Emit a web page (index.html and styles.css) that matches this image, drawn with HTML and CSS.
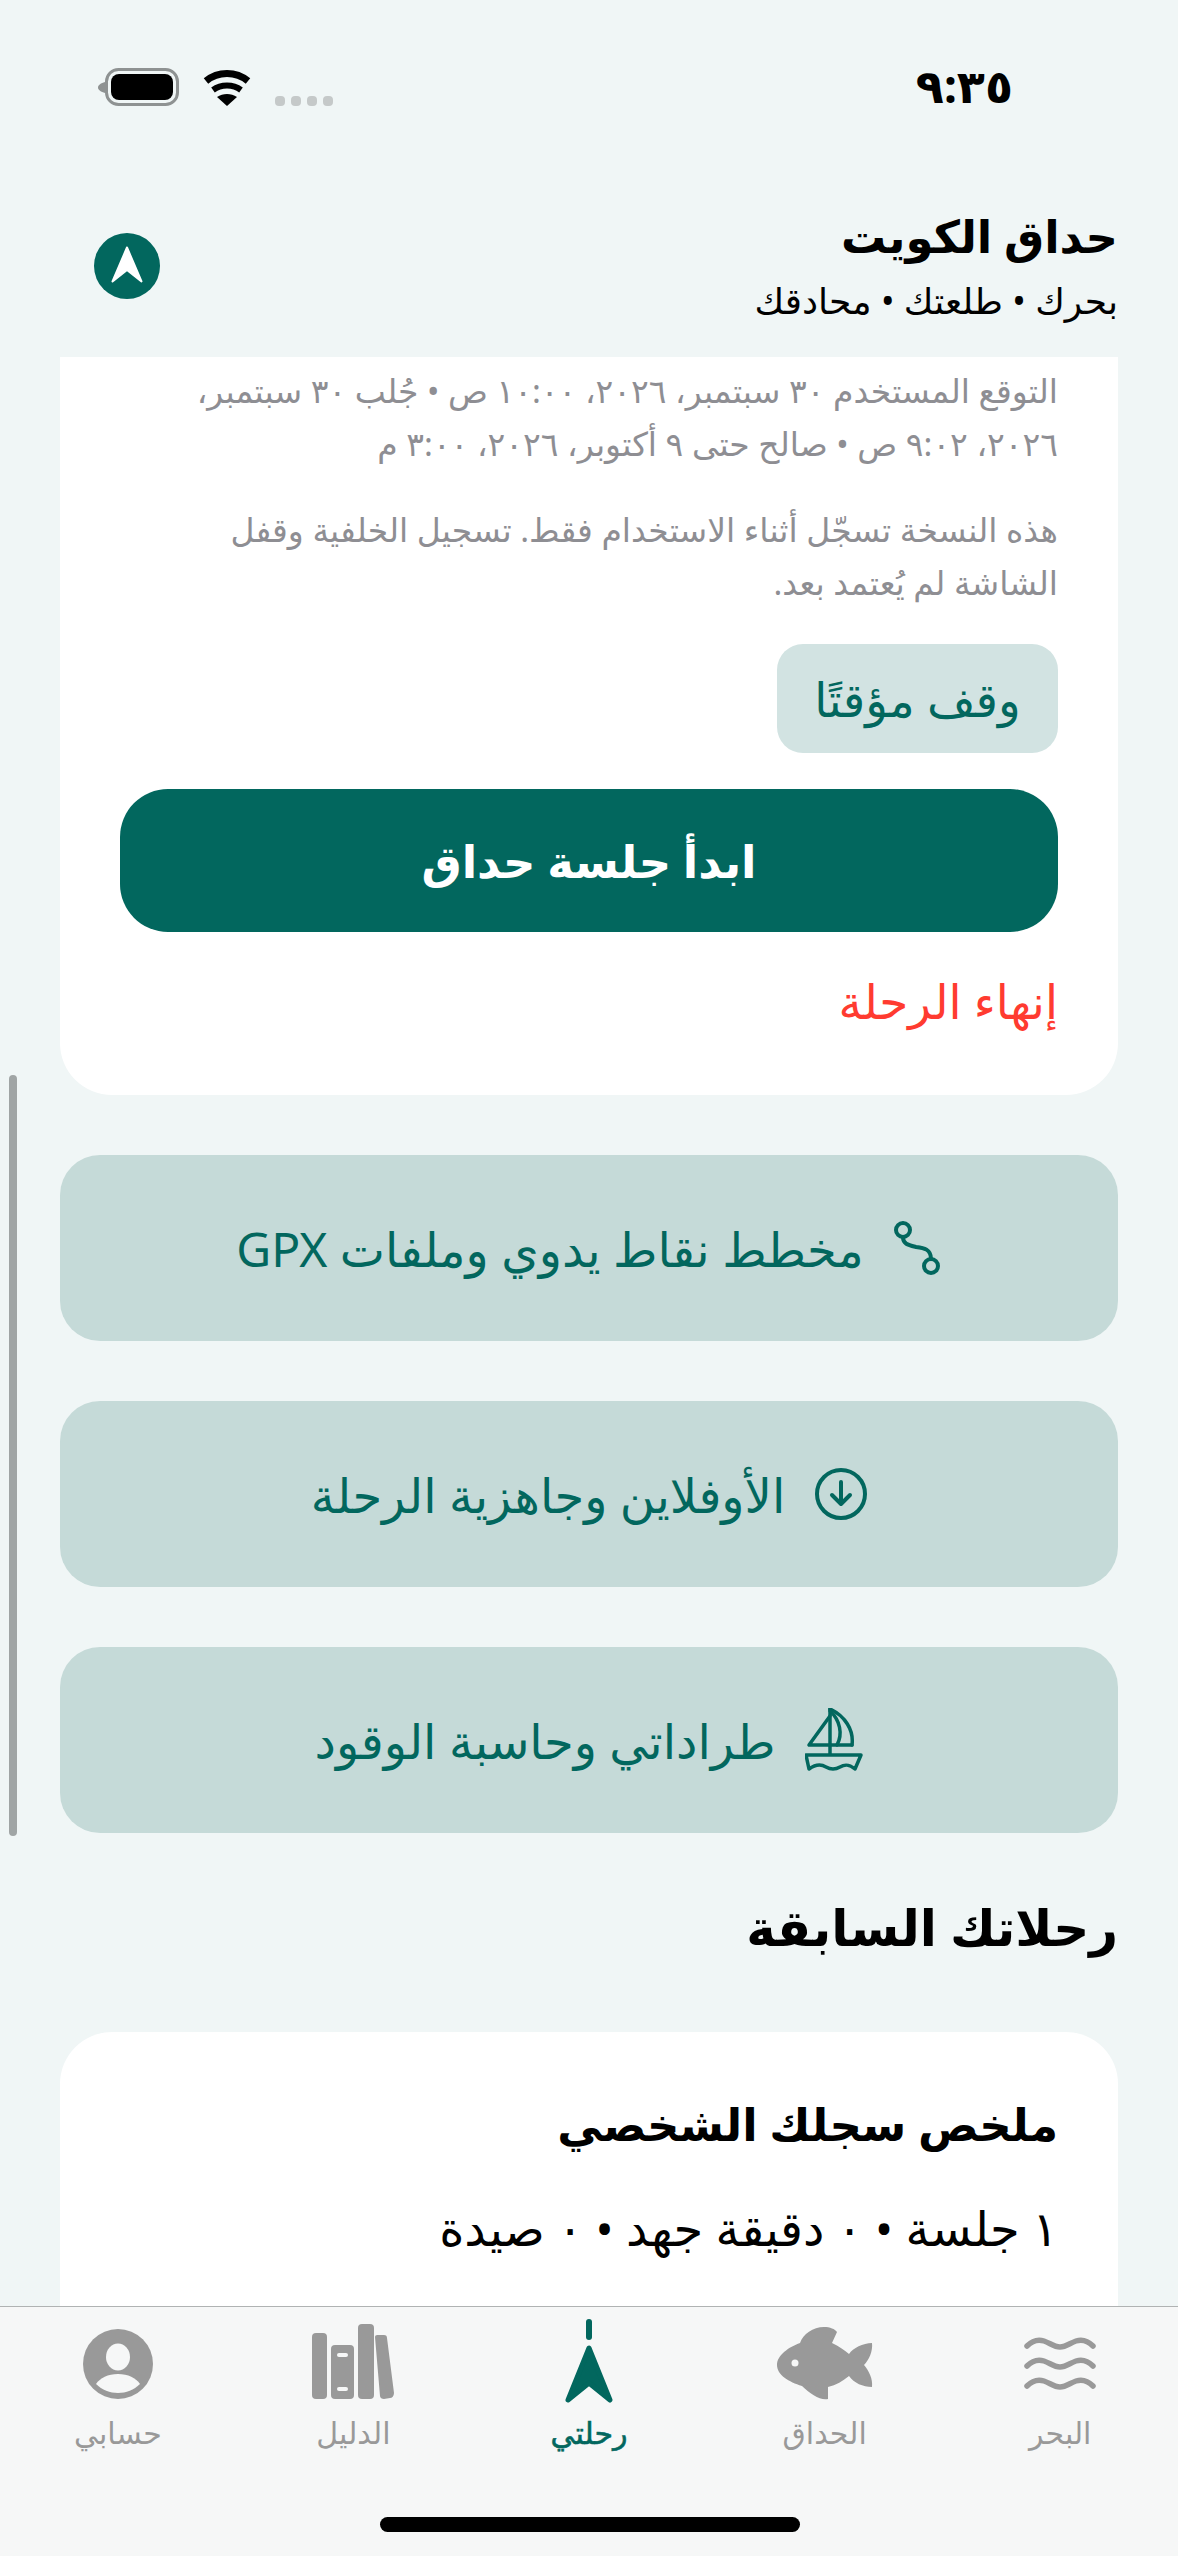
FILE: index.html
```html
<!DOCTYPE html>
<html lang="ar" dir="rtl">
<head>
    <meta charset="UTF-8">
    <meta name="viewport" content="width=device-width, initial-scale=1.0">
    <title>حداق الكويت</title>
    <link rel="stylesheet" href="styles.css">
</head>
<body>
<div class="phone">
    <div class="status">
        <span class="time">٩:٣٥</span>
        <div class="status-icons">
            <span class="dots"><i></i><i></i><i></i><i></i></span>
            <svg class="wifi" width="50" height="38" viewBox="0 0 50 38">
                <path d="M4 13C16 3 34 3 46 13" fill="none" stroke="#000" stroke-width="7"/>
                <path d="M11 22C19 16 31 16 39 22" fill="none" stroke="#000" stroke-width="6"/>
                <path d="M25 38L15 29C21 25 29 25 35 29Z" fill="#000"/>
            </svg>
            <svg class="battery" width="81" height="38" viewBox="0 0 81 38">
                <path d="M7 14C3 15 0 17 0 19.500C0 22 3 24 7 25Z" fill="#8e9292"/>
                <rect x="8.500" y="1.500" width="71" height="35" rx="12" fill="none" stroke="#8e9292" stroke-width="3"/>
                <rect x="13" y="6" width="62" height="26" rx="8" fill="#000"/>
            </svg>
        </div>
    </div>

    <header class="top">
        <div class="top-text">
            <h1>حداق الكويت</h1>
            <p>بحرك • طلعتك • محادقك</p>
        </div>
        <svg class="top-icon" width="66" height="66" viewBox="0 0 66 66">
            <circle cx="33" cy="33" r="33" fill="#02675e"/>
            <path d="M33 14.500L18.500 48.500L33 37L47.500 48.500Z" fill="#fff" stroke="#fff" stroke-width="2" stroke-linejoin="round"/>
        </svg>
    </header>

    <main class="content">
        <section class="card card-trip">
            <p class="note note-first">التوقع المستخدم ٣٠ سبتمبر، ٢٠٢٦، ١٠:٠٠ ص • جُلب ٣٠ سبتمبر، ٢٠٢٦، ٩:٠٢ ص • صالح حتى ٩ أكتوبر، ٢٠٢٦، ٣:٠٠ م</p>
            <p class="note">هذه النسخة تسجّل أثناء الاستخدام فقط. تسجيل الخلفية وقفل الشاشة لم يُعتمد بعد.</p>
            <button class="btn-pause">وقف مؤقتًا</button>
            <button class="btn-start">ابدأ جلسة حداق</button>
            <button class="btn-end">إنهاء الرحلة</button>
        </section>

        <a class="link-row">
            <svg width="48" height="56" viewBox="0 0 48 56" fill="none" stroke="#02675e" stroke-width="4" stroke-linecap="round">
                <circle cx="9" cy="10" r="7"/>
                <circle cx="37" cy="46" r="7"/>
                <path d="M9 17C9 24 14 25 22 27C30 28 37 29 37 39"/>
            </svg>
            <span>مخطط نقاط يدوي وملفات GPX</span>
        </a>
        <a class="link-row">
            <svg width="52" height="52" viewBox="0 0 52 52" fill="none" stroke="#02675e" stroke-width="4" stroke-linecap="round" stroke-linejoin="round">
                <circle cx="26" cy="26" r="24"/>
                <path d="M26 14V35M17 27L26 36L35 27"/>
            </svg>
            <span>الأوفلاين وجاهزية الرحلة</span>
        </a>
        <a class="link-row">
            <svg width="58" height="64" viewBox="0 0 58 64" fill="none" stroke="#02675e" stroke-width="3.500" stroke-linecap="round" stroke-linejoin="round">
                <path d="M25 1V46"/>
                <path d="M25 8L4 37H47"/>
                <path d="M25 1C40 8 49 22 47 37"/>
                <path d="M25 3C35 12 38 26 32 37"/>
                <path d="M1 47H56L50 61C44 56 40 56 35 59C30 62 26 62 21 59C16 56 11 56 4 61Z"/>
            </svg>
            <span>طراداتي وحاسبة الوقود</span>
        </a>

        <h2 class="section-title">رحلاتك السابقة</h2>

        <section class="card card-history">
            <h3>ملخص سجلك الشخصي</h3>
            <p>١ جلسة • ٠ دقيقة جهد • ٠ صيدة</p>
        </section>
    </main>

    <nav class="tabs">
        <a class="tab">
            <svg width="72" height="76" viewBox="0 0 72 76" fill="none" stroke="#999" stroke-width="5.500" stroke-linecap="round">
                <path d="M3 18C9 12 14 11 20 13C26 15 30 19 36 19C42 19 46 15 52 13C58 11 63 12 69 18"/>
                <path d="M3 38C9 32 14 31 20 33C26 35 30 39 36 39C42 39 46 35 52 33C58 31 63 32 69 38"/>
                <path d="M3 58C9 52 14 51 20 53C26 55 30 59 36 59C42 59 46 55 52 53C58 51 63 52 69 58"/>
            </svg>
            <span>البحر</span>
        </a>
        <a class="tab">
            <svg width="96" height="77" viewBox="0 0 96 77">
                <path d="M0 38C0 28 12 20 23 16C26 7 36 0 47 0C53 0 58 2 60 5L55 16C62 19 67 23 72 27C76 21 86 16 95 16C96 24 92 33 87 38C92 44 96 52 95 60C86 60 77 56 72 49C66 54 59 58 51 60L51 72C44 74 33 67 25 59C12 55 0 48 0 38Z" fill="#999"/>
                <circle cx="18" cy="36" r="3.500" fill="#f6f7f7"/>
            </svg>
            <span>الحداق</span>
        </a>
        <a class="tab tab-active">
            <svg width="48" height="86" viewBox="0 0 48 86">
                <rect x="21" y="1" width="6" height="21" rx="3" fill="#02675e"/>
                <path d="M24 30L3 82L24 65L45 82Z" fill="#02675e" stroke="#02675e" stroke-width="5" stroke-linejoin="round"/>
            </svg>
            <span>رحلتي</span>
        </a>
        <a class="tab">
            <svg width="82" height="80" viewBox="0 0 82 80" fill="#999">
                <rect x="0" y="9" width="15" height="66" rx="4"/>
                <rect x="19" y="21" width="23" height="54" rx="4"/>
                <rect x="46" y="0" width="16" height="75" rx="4"/>
                <path d="M63 13C63 11 65 11 67 11L72 11C74 11 75 12 75 14L82 69C82 72 80 74 78 74L72 75C70 75 68 74 68 72Z"/>
                <rect x="25" y="29" width="11" height="4" rx="2" fill="#f6f7f7"/>
                <rect x="25" y="63" width="11" height="4" rx="2" fill="#f6f7f7"/>
            </svg>
            <span>الدليل</span>
        </a>
        <a class="tab">
            <svg width="72" height="76" viewBox="0 0 72 76">
                <circle cx="36" cy="36" r="35" fill="#999"/>
                <ellipse cx="36" cy="29" rx="12" ry="13.500" fill="#f6f7f7"/>
                <path d="M14 56C18 50 26 46 36 46C46 46 54 50 58 56C52 62 44 65 36 65C28 65 20 62 14 56Z" fill="#f6f7f7"/>
            </svg>
            <span>حسابي</span>
        </a>
    </nav>

    <div class="scrollbar"></div>
    <div class="home-bar"></div>
</div>
</body>
</html>
```

FILE: styles.css
```css
* {
    box-sizing: border-box;
}
body {
    margin: 0;
    font-family: "Noto Sans", "DejaVu Sans", sans-serif;
    color: #000;
}
p, h1, h2, h3 {
    margin: 0;
}
.phone {
    position: relative;
    width: 1178px;
    height: 2556px;
    overflow: hidden;
    background: #f0f6f6;
    display: flex;
    flex-direction: column;
}

/* status bar */
.status {
    height: 175px;
    padding: 62px 165px 0 98px;
    display: flex;
    justify-content: space-between;
    align-items: flex-start;
}
.time {
    font-size: 46px;
    font-weight: 700;
    line-height: 46px;
}
.status-icons {
    display: flex;
    align-items: flex-end;
    gap: 23px;
    padding-top: 6px;
}
.dots {
    display: flex;
    gap: 6px;
}
.dots i {
    width: 10px;
    height: 10px;
    border-radius: 4px;
    background: #c5c9c9;
}

/* header */
.top {
    height: 182px;
    padding: 0 60px 0 94px;
    display: flex;
    justify-content: space-between;
    align-items: center;
}
.top h1 {
    font-size: 45px;
    font-weight: 700;
    line-height: 70px;
}
.top p {
    font-size: 36px;
    line-height: 60px;
}

.content {
    flex: 1;
    min-height: 0;
    overflow: hidden;
    padding: 0 60px;
}
.card {
    background: #fff;
    padding: 0 60px;
}
.card-trip {
    height: 738px;
    border-radius: 0 0 52px 52px;
    padding-top: 7px;
    display: flex;
    flex-direction: column;
    align-items: flex-start;
}
.note {
    max-width: 880px;
    font-size: 33px;
    line-height: 53px;
    color: #8e8e93;
    margin-bottom: 33px;
}
button {
    font-family: inherit;
    border: 0;
    padding: 0;
}
.btn-pause {
    width: 281px;
    height: 109px;
    margin-top: 2px;
    border-radius: 26px;
    background: #d2e3e2;
    color: #02675e;
    font-size: 47px;
}
.btn-start {
    width: 938px;
    height: 143px;
    margin-top: 36px;
    border-radius: 48px;
    background: #02675e;
    color: #fff;
    font-size: 45px;
    font-weight: 700;
}
.btn-end {
    margin-top: 42px;
    background: none;
    color: #ff3b30;
    font-size: 47px;
    line-height: 54px;
}

.link-row {
    height: 186px;
    margin-top: 60px;
    border-radius: 40px;
    background: #c5dad8;
    color: #02675e;
    font-size: 48px;
    display: flex;
    justify-content: center;
    align-items: center;
    gap: 30px;
}
.section-title {
    margin-top: 56px;
    font-size: 50px;
    font-weight: 700;
    line-height: 76px;
}
.card-history {
    margin-top: 67px;
    height: 400px;
    border-radius: 52px;
    padding-top: 62px;
}
.card-history h3 {
    font-size: 45px;
    font-weight: 700;
    line-height: 60px;
}
.card-history p {
    margin-top: 44px;
    font-size: 48px;
    line-height: 60px;
}

/* bottom tabs */
.tabs {
    height: 250px;
    border-top: 1px solid #b0b3b3;
    background: #f6f7f7;
    display: flex;
}
.tab {
    flex: 1;
    height: 146px;
    display: flex;
    flex-direction: column;
    align-items: center;
    justify-content: flex-end;
    font-size: 30px;
    line-height: 40px;
    color: #999;
}
.tab svg {
    margin-bottom: 9px;
}
.tab-active {
    color: #02675e;
    -webkit-text-stroke: 0.6px #02675e;
}

.scrollbar {
    position: absolute;
    left: 9px;
    top: 1075px;
    width: 8px;
    height: 761px;
    border-radius: 4px;
    background: #a0a5a5;
}
.home-bar {
    position: absolute;
    left: 380px;
    top: 2517px;
    width: 420px;
    height: 15px;
    border-radius: 8px;
    background: #000;
}
```
